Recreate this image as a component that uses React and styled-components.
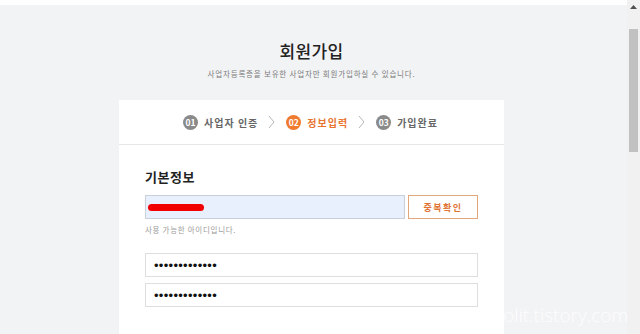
import React from "react";
import styled, { createGlobalStyle } from "styled-components";

const GlobalStyle = createGlobalStyle`
html, body {
    margin: 0;
    padding: 0;
    background: #f2f3f5;
    overflow: hidden;
    font-family: "Noto Sans CJK KR", "Noto Sans", sans-serif;
}
*{
    box-sizing: border-box;
}
`;

const Screen = styled.div`
position: relative;
width: 640px;
height: 334px;
display: flex;
overflow: hidden;
`;

const Main = styled.div`
flex: 1;
display: flex;
flex-direction: column;
align-items: center;
border-top: 5px solid #fff;
padding-right: 4px;
`;

const Title = styled.h1`
margin: 35px 0 0;
font-size: 17px;
line-height: 22px;
font-weight: 500;
color: #222;
letter-spacing: 0.3px;
`;

const SubTitle = styled.p`
margin: 6px 0 0;
font-size: 7.5px;
line-height: 12px;
color: #7a7a7a;
letter-spacing: 0.8px;
`;

const Card = styled.div`
width: 385px;
flex: 1;
margin-top: 20px;
background: #fff;
display: flex;
flex-direction: column;
`;

const StepBar = styled.div`
height: 45px;
display: flex;
justify-content: center;
align-items: center;
border-bottom: 1px solid #e6e6e6;
padding-right: 2px;
`;

const Step = styled.div`
display: flex;
align-items: center;
gap: 6px;
font-size: 10px;
font-weight: 600;
letter-spacing: 1px;
color: ${p => (p.$active ? "#e8742f" : "#666")};
`;

const StepNum = styled.span`
width: 15px;
height: 15px;
border-radius: 50%;
display: flex;
justify-content: center;
align-items: center;
background: ${p => (p.$active ? "#f07a2e" : "#8a8a8a")};
color: #fff;
font-size: 8.5px;
font-weight: 700;
letter-spacing: 0;
`;

const Chevron = styled.svg`
margin: 0 11px 0 10px;
`;

const Body = styled.div`
padding: 24px 26px 0;
display: flex;
flex-direction: column;
`;

const SectionTitle = styled.h2`
margin: 0;
font-size: 13px;
line-height: 16px;
font-weight: 600;
color: #222;
letter-spacing: 0.5px;
`;

const IdRow = styled.div`
margin-top: 10px;
display: flex;
gap: 3px;
height: 24px;
`;

const IdField = styled.div`
flex: 1;
background: #e8f0fe;
border: 1px solid #c9d0da;
display: flex;
align-items: center;
padding-left: 2px;
`;

const Redact = styled.span`
width: 56px;
height: 7px;
border-radius: 4px;
background: #f20000;
`;

const CheckButton = styled.button`
width: 70px;
height: 24px;
background: #fff;
border: 1px solid #e2a77c;
color: #e07434;
font-family: inherit;
font-size: 9px;
font-weight: 700;
letter-spacing: 1.5px;
padding: 0;
`;

const Help = styled.p`
margin: 5px 0 0;
font-size: 7.5px;
line-height: 11px;
color: #9a9a9a;
letter-spacing: 0.7px;
`;

const PwField = styled.input`
height: 24px;
width: 100%;
margin-top: ${p => p.$gap}px;
border: 1.5px solid #dedede;
background: #fff;
padding: 0 0 0 8px;
font-family: "Liberation Sans", sans-serif;
font-size: 13px;
letter-spacing: 0.3px;
color: #111;
outline: none;
`;

const Watermark = styled.div`
position: absolute;
left: 503px;
top: 306px;
font-family: "Open Sans", sans-serif;
font-weight: 300;
font-size: 19px;
line-height: 1;
color: rgba(255, 255, 255, 0.85);
`;

const Scrollbar = styled.div`
width: 13px;
background: #f1f1f1;
display: flex;
flex-direction: column;
align-items: center;
`;

const Arrow = styled.div`
height: 13px;
display: flex;
align-items: center;
justify-content: center;
`;

const Thumb = styled.div`
margin-top: 16px;
width: 9px;
height: 123px;
background: #c1c1c1;
`;

const steps = [
    { num: "01", label: "사업자 인증" },
    { num: "02", label: "정보입력", active: true },
    { num: "03", label: "가입완료" },
];

const App = () => {
    return (
        <Screen>
            <GlobalStyle />
            <Main>
                <Title>회원가입</Title>
                <SubTitle>사업자등록증을 보유한 사업자만 회원가입하실 수 있습니다.</SubTitle>
                <Card>
                    <StepBar>
                        {steps.map((s, i) => (
                            <React.Fragment key={s.num}>
                                {i > 0 && (
                                    <Chevron width="7" height="14" viewBox="0 0 7 14">
                                        <polyline points="1,1 6,7 1,13" fill="none" stroke="#b8b8b8" strokeWidth="1" />
                                    </Chevron>
                                )}
                                <Step $active={s.active}>
                                    <StepNum $active={s.active}>{s.num}</StepNum>
                                    {s.label}
                                </Step>
                            </React.Fragment>
                        ))}
                    </StepBar>
                    <Body>
                        <SectionTitle>기본정보</SectionTitle>
                        <IdRow>
                            <IdField>
                                <Redact />
                            </IdField>
                            <CheckButton>중복확인</CheckButton>
                        </IdRow>
                        <Help>사용 가능한 아이디입니다.</Help>
                        <PwField type="password" readOnly defaultValue="aaaaaaaaaaaaa" $gap={18} />
                        <PwField type="password" readOnly defaultValue="aaaaaaaaaaaaa" $gap={6} />
                    </Body>
                </Card>
            </Main>
            <Scrollbar>
                <Arrow>
                    <svg width="7" height="4" viewBox="0 0 7 4">
                        <polygon points="0,4 3.5,0 7,4" fill="#505050" />
                    </svg>
                </Arrow>
                <Thumb />
            </Scrollbar>
            <Watermark>olit.tistory.com</Watermark>
        </Screen>
    );
};

export default App;
